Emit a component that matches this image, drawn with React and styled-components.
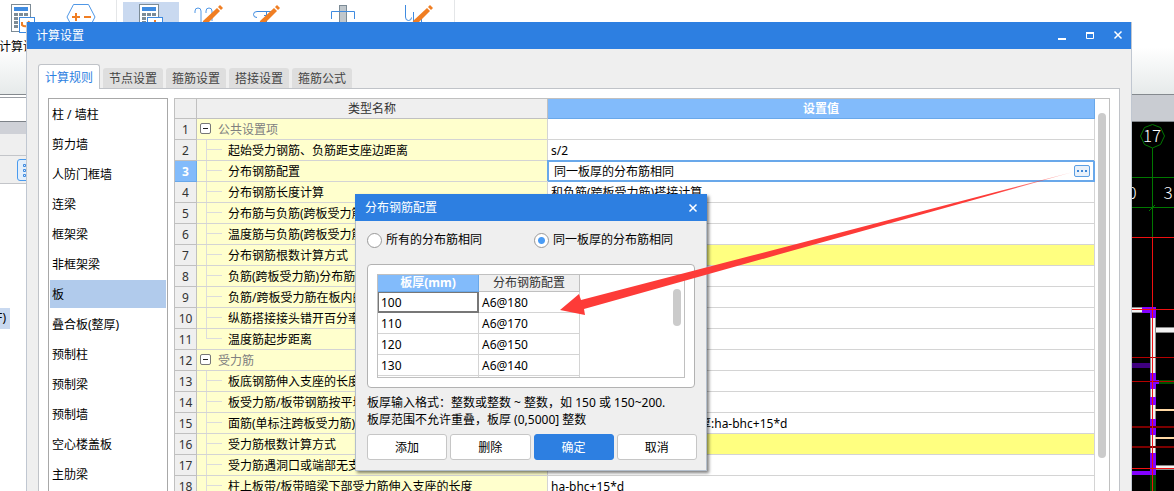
import React, { useState } from 'react';
import styled, { createGlobalStyle, css } from 'styled-components';

const GlobalStyle = createGlobalStyle`
  * { box-sizing: border-box; }
  body {
    margin: 0;
    background: #fff;
    color: #000;
    font: 12px/20px 'Noto Sans', 'Noto Sans CJK SC', sans-serif;
  }
  button, input {
    font: inherit;
    color: inherit;
    margin: 0;
    padding: 0;
  }
`;

const BLUE = '#2d7fe1';
const HEAD_BLUE = '#82bbfb';
const PANEL = '#efefef';

/* ---------- application behind the dialogs ---------- */

const Page = styled.div`
  position: relative;
  height: 100vh;
  overflow: hidden;
  display: flex;
  flex-direction: column;
`;

const Ribbon = styled.header`
  flex: none;
  display: flex;
  gap: 2px;
  height: 95px;
  margin-left: -5px;
  border-bottom: 1px solid #84898e;
  background: linear-gradient(#fff 50%, #e6eaea);
`;

const Tool = styled.button`
  width: ${(p) => (p.$wide ? 92 : 56)}px;
  height: 58px;
  margin-top: 2px;
  border: 0;
  background: ${(p) => (p.$active ? '#c9d9f0' : 'transparent')};
  display: flex;
  flex-direction: column;
  align-items: center;
  gap: 3px;
  padding-top: 2px;
  white-space: nowrap;
`;

const ToolSplit = styled.span`
  width: 1px;
  margin: 0 4px 0 5px;
  background: #e4e6e8;
`;

const Workspace = styled.div`
  flex: 1;
  min-height: 0;
  display: flex;
`;

const SidePane = styled.aside`
  width: 300px;
  display: flex;
  flex-direction: column;
`;

const SideField = styled.div`
  height: 25px;
  margin-top: 2px;
  border-top: 1px solid #9a9ea4;
  border-bottom: 1px solid #7d8288;
`;

const SideCaption = styled.div`
  height: ${(p) => (p.$dark ? 12 : 21)}px;
  background: ${(p) => (p.$dark ? '#cfd1d7' : PANEL)};
`;

const SideTools = styled.div`
  height: 29px;
  padding: 3px 17px;
  background: ${PANEL};
  border-top: 1px solid #c3c5c9;
  border-bottom: 1px solid #c3c5c9;
`;

const ListToggle = styled.button`
  width: 22px;
  height: 22px;
  border: 1px solid #4a9bee;
  border-radius: 3px;
  background: #e3effc;
  display: flex;
  padding: 3px 4px;
`;

const TreeItem = styled.div`
  display: flex;
  justify-content: flex-end;
  width: 10px;
  margin-top: 124px;
  height: 21px;
  background: #c9d9f0;
  padding-right: 4px;
  white-space: nowrap;
`;

const Drawing = styled.section`
  flex: 1;
  display: flex;
  flex-direction: column;
  align-items: stretch;
`;

const DrawingBar = styled.div`
  height: 27px;
  background: #c9ccd2;
  border-bottom: 1px solid #80858b;
`;

const DrawingArea = styled.div`
  flex: 1;
  min-height: 0;
  overflow: hidden;
  background: #000;
  display: flex;
  justify-content: flex-end;
  align-items: flex-start;
  svg {
    flex: none;
    overflow: visible;
  }
`;

/* ---------- windows ---------- */

const SettingsWindow = styled.section`
  position: absolute;
  inset: 22px 42px 0 26px;
  overflow: hidden;
  display: flex;
  flex-direction: column;
  background: ${PANEL};
  border: solid #c0c7d1;
  border-width: 0 1px;
`;

const TitleBar = styled.div`
  flex: none;
  display: flex;
  align-items: center;
  justify-content: space-between;
  height: 27px;
  margin: 0 -1px;
  padding-left: 10px;
  background: ${BLUE};
  color: #fff;
`;

const Title = styled.h1`
  margin: 0;
  font-size: 12px;
  font-weight: 400;
`;

const WindowButton = styled.button`
  width: 28px;
  height: 27px;
  border: 0;
  background: none;
  display: inline-flex;
  align-items: center;
  justify-content: center;
`;

const Tabs = styled.nav`
  flex: none;
  display: flex;
  align-items: flex-end;
  gap: 3px;
  padding: 15px 11px 0;
`;

const Tab = styled.button`
  width: 60px;
  height: 20px;
  padding-top: 1px;
  border: 0;
  border-radius: 3px 3px 0 0;
  background: #dedede;
  color: #444;
  white-space: nowrap;
  ${(p) => p.$active && css`
    width: 62px;
    height: 25px;
    margin: 0 0 -1px;
    z-index: 1;
    border: 1px solid #c0c3c8;
    border-bottom: 0;
    background: #fff;
    color: ${BLUE};
  `}
`;

const TabPanel = styled.div`
  flex: 1;
  min-height: 0;
  margin: 0 11px;
  padding: 9px 9px 0;
  display: flex;
  gap: 6px;
  background: #fff;
  border: 1px solid #c0c3c8;
  border-bottom: 0;
`;

const Categories = styled.ul`
  flex: none;
  width: 120px;
  margin: 0;
  padding: 1px;
  list-style: none;
  display: flex;
  flex-direction: column;
  gap: 2px;
  overflow: hidden;
  border: 1px solid #a8a8a8;
  border-bottom: 0;
`;

const Category = styled.li`
  flex: none;
  height: 28px;
  padding: 0 2px;
  line-height: 30px;
  background: ${(p) => (p.$active ? '#b1cbec' : 'transparent')};
`;

const GridFrame = styled.div`
  flex: 1;
  min-width: 0;
  overflow: hidden;
  display: flex;
  align-items: flex-start;
  background: #fff;
  border: 1px solid #c0c0c0;
  border-bottom: 0;
`;

const ScrollTrack = styled.div`
  flex: none;
  width: 14px;
  padding: 14px 3px 0;
`;

const ScrollThumb = styled.div`
  width: 8px;
  height: ${(p) => p.$length}px;
  border-radius: 4px;
  background: #cbcbcb;
`;

const Grid = styled.table`
  flex: 1;
  width: 100%;
  table-layout: fixed;
  border-collapse: separate;
  border-spacing: 0;
  th, td {
    height: 21px;
    padding: 2px 0 0;
    line-height: 18px;
    border: solid #d4d4d4;
    border-width: 0 1px 1px 0;
    white-space: nowrap;
    overflow: hidden;
  }
`;

const Col = styled.col`
  width: ${(p) => p.$w}px;
`;

const HeadCell = styled.th`
  && {
    height: 20px;
    padding-top: 1px;
    border-color: #c0c0c0;
    background: ${PANEL};
    color: #333;
    font-weight: 400;
    ${(p) => p.$active && css`
      background: ${HEAD_BLUE};
      border-color: #69a8ea;
      color: #fff;
      font-weight: 700;
    `}
  }
`;

const RowHead = styled.th`
  && {
    border-color: #c0c0c0;
    background: ${PANEL};
    color: #333;
    font-weight: 400;
    ${(p) => p.$active && css`
      background: ${HEAD_BLUE};
      border-color: #69a8ea;
      color: #fff;
      font-weight: 700;
    `}
  }
`;

const NameCell = styled.td`
  && {
    padding: 0;
    background: #ffffcd;
  }
`;

const NameLine = styled.div`
  display: flex;
  height: 20px;
  line-height: 22px;
  color: ${(p) => (p.$group ? '#808080' : '#000')};
`;

const Branch = styled.span`
  flex: none;
  width: 16px;
  margin: 0 6px 0 9px;
  background:
    linear-gradient(#dcdcdc, #dcdcdc) 0 0 / 1px ${(p) => (p.$last ? '10px' : '100%')} no-repeat,
    linear-gradient(#dcdcdc, #dcdcdc) 0 9px / 100% 1px no-repeat;
`;

const Collapse = styled.button`
  flex: none;
  width: 11px;
  height: 11px;
  margin: 4px 7px 0 3px;
  border: 1px solid #777;
  border-radius: 2px;
  background: #fff linear-gradient(#222, #222) center / 5px 1px no-repeat;
`;

const ValueCell = styled.td`
  && {
    padding-left: ${(p) => p.$indent || 3}px;
    background: ${(p) => (p.$marked ? '#ffff80' : '#fff')};
  }
`;

const EditCell = styled.td`
  && {
    position: relative;
    padding: 0;
    background: #fff;
    box-shadow: -1px -1px 0 #69a8ea, inset 0 0 0 1px #69a8ea;
    border-color: #69a8ea;
  }
`;

const EditLine = styled.div`
  display: flex;
  align-items: center;
  height: 20px;
  padding: 0 4px 0 6px;
`;

const EditInput = styled.input`
  flex: 1;
  min-width: 0;
  height: 18px;
  padding-top: 1px;
  border: 0;
  outline: 0;
  background: transparent;
`;

const MoreButton = styled.button`
  width: 16px;
  height: 12px;
  border: 1px solid #5c9fe3;
  border-radius: 2px;
  background: #e9f1fa;
  display: flex;
  align-items: center;
  justify-content: center;
`;

/* ---------- distribution bar dialog ---------- */

const ConfigDialog = styled.section`
  position: absolute;
  left: 355px;
  top: 194px;
  width: 352px;
  background: ${PANEL};
  border: 1px solid #b4bfcc;
  border-top: 0;
  box-shadow: 2px 2px 3px rgba(0, 0, 0, 0.5);
`;

const DialogBody = styled.div`
  padding: 9px 9px 10px 11px;
`;

const Choices = styled.div`
  display: grid;
  grid-template-columns: 167px 1fr;
  height: 34px;
`;

const Choice = styled.label`
  display: flex;
  height: 20px;
  line-height: 22px;
  align-items: center;
  gap: 4px;
`;

const Radio = styled.input`
  appearance: none;
  width: 15px;
  height: 15px;
  border: 1px solid #999;
  border-radius: 50%;
  background: #fff;
  &:checked {
    background: radial-gradient(circle, #4a9cf5 3px, #fff 4px);
  }
`;

const GroupBox = styled.div`
  margin-right: 2px;
  padding: 9px;
  background: #fff;
  border: 1px solid #b2b2b2;
  border-radius: 4px;
`;

const SmallFrame = styled.div`
  display: flex;
  justify-content: space-between;
  height: 104px;
  overflow: hidden;
  border: 1px solid #c0c0c0;
`;

const SmallGrid = styled(Grid)`
  flex: none;
  width: 202px;
  ${HeadCell} {
    height: 17px;
    padding-top: 0;
    line-height: 16px;
  }
`;

const SmallCell = styled.td`
  && {
    padding-left: 3px;
    ${(p) => p.$current && css`
      box-shadow: inset 0 0 0 1px #777;
      border-color: #777;
    `}
  }
`;

const Hint = styled.p`
  margin: 6px 0;
  line-height: 17px;
`;

const Actions = styled.div`
  display: flex;
  gap: 3px;
`;

const Action = styled.button`
  flex: 1;
  height: 26px;
  padding-top: 1px;
  border: 1px solid ${(p) => (p.$primary ? BLUE : '#c6c6c6')};
  border-radius: 3px;
  background: ${(p) => (p.$primary ? BLUE : '#fff')};
  color: ${(p) => (p.$primary ? '#fff' : '#000')};
`;

const Pointer = styled.svg`
  position: absolute;
  left: 555px;
  top: 165px;
  pointer-events: none;
`;

/* ---------- drawings ---------- */

const CalculatorIcon = ({ mark }) => (
  <svg width="24" height="30" viewBox="0 0 24 30" aria-hidden="true">
    <rect x="0.5" y="0.5" width="19" height="27" fill="#fff" stroke="#7c8b96" />
    <rect x="3" y="3" width="14" height="4" fill="#3f8be0" />
    {[9, 13, 17, 21].map((y) =>
      [3, 8, 13].map((x) => <rect key={`${x}-${y}`} x={x} y={y} width="4" height="3" fill="#7c8b96" />)
    )}
    <rect x="8.5" y="13.5" width="15" height="15" fill="#fff" stroke="#3f8be0" />
    {mark === 'gear' ? (
      <path d="M11 18v3q2 2 5 1l2-5" fill="none" stroke="#f07e23" strokeWidth="2" />
    ) : (
      <path d="M16 16v6M13 20h6" stroke="#f07e23" strokeWidth="2" />
    )}
  </svg>
);

const HexIcon = () => (
  <svg width="30" height="30" viewBox="0 0 30 30" aria-hidden="true">
    <path d="M7.500 .5h15l6.500 12.500-6.500 12.500h-15L1 13z" fill="#fff" stroke="#4f97e6" />
    <path d="M6 13h8M10 9v8M18 13h7" stroke="#f07e23" strokeWidth="2" />
  </svg>
);

const Pencil = ({ x }) => (
  <g transform={`translate(${x} 0)`} fill="#f07e23">
    <path d="M14 4l3 3L4 20l-5 2 1-5z" />
    <path d="M15 3l2-2 3 3-2 2z" />
  </g>
);

const HooksIcon = () => (
  <svg width="30" height="30" viewBox="0 0 30 30" aria-hidden="true">
    <path d="M1 9V7q0-3 3-3t3 3v21M12 9V7q0-3 3-3t3 3v10" fill="none" stroke="#4f97e6" />
    <Pencil x={9} />
  </svg>
);

const BentIcon = () => (
  <svg width="30" height="30" viewBox="0 0 30 30" aria-hidden="true">
    <path d="M19 7.500H5Q1.500 7.500 1.500 10.500T5 13.500M14.500 8v10M12 11.500h7" fill="none" stroke="#3f8be0" />
    <Pencil x={8} />
  </svg>
);

const ColumnIcon = () => (
  <svg width="26" height="30" viewBox="0 0 26 30" aria-hidden="true">
    <rect x="9.500" y="1.500" width="7" height="27" fill="#c0c7cc" stroke="#7c8b96" />
    <path d="M1.500 15V7.500h23V15" fill="none" stroke="#3f8be0" />
  </svg>
);

const HookRightIcon = () => (
  <svg width="30" height="30" viewBox="0 0 30 30" aria-hidden="true">
    <path d="M1.500 1v12q0 3.500 3 3.500t3-3M9.500 8v20M17.500 14v14" fill="none" stroke="#3f8be0" />
    <Pencil x={9} />
  </svg>
);

const CloseIcon = () => (
  <svg width="10" height="10" viewBox="0 0 10 10" aria-hidden="true">
    <path d="M1.500 1.500l7 7M8.500 1.500l-7 7" stroke="#fff" strokeWidth="1.500" />
  </svg>
);

const MinimizeIcon = () => (
  <svg width="8" height="8" viewBox="0 0 8 8" aria-hidden="true">
    <path d="M0 7h8" stroke="#fff" strokeWidth="2" />
  </svg>
);

const MaximizeIcon = () => (
  <svg width="8" height="8" viewBox="0 0 8 8" aria-hidden="true">
    <path d="M.5 1v5.500h7V1" fill="none" stroke="#fff" />
    <path d="M0 1h8" stroke="#fff" strokeWidth="2" />
  </svg>
);

const FloorPlan = () => (
  <svg width="42" height="369" viewBox="0 0 42 369" shapeRendering="crispEdges" role="img" aria-label="17">
    <g stroke="#007800" fill="none">
      <path shapeRendering="auto" d="M20.500 2.500l8 3 4 8.500-4 8.500-8 3.500-8-3.500-4-8.500 4-8.500z" />
      <path d="M20.500 26v90M0 55.500h42M0 85.500h42M17 89l6-6" />
    </g>
    <g fill="#fff" fontFamily="'Noto Sans CJK SC', sans-serif" fontSize="17" fontWeight="300" textAnchor="middle">
      <text x="20" y="20">17</text>
      <text x="0" y="77">0</text>
      <text x="36" y="77">3</text>
    </g>
    <g fill="#f2f2f2" stroke="#8a8a8a">
      <rect x="-1.500" y="185.500" width="12" height="5" />
      <rect x="20.500" y="205.500" width="24" height="5" />
      <rect x="18.500" y="190.500" width="5" height="142" />
      <rect x="22.500" y="343.500" width="24" height="4" />
    </g>
    <g fill="#8200ff">
      <path d="M10 185h14v11h-6v-5h-8z" />
      <rect x="18" y="251" width="6" height="16" />
      <rect x="24" y="258" width="3" height="4" />
      <rect x="18" y="275" width="6" height="8" />
      <rect x="18" y="297" width="6" height="16" />
      <rect x="18" y="331" width="6" height="22" />
      <rect x="0" y="349" width="20" height="4" />
    </g>
    <rect x="0" y="241" width="18" height="5" fill="#3f0080" />
    <rect x="27" y="258" width="15" height="4" fill="#005000" />
    <rect x="18" y="353" width="6" height="16" fill="#004a00" />
    <path d="M23 288h19M23 316h19" stroke="#ffd8a4" strokeWidth="2" />
    <path d="M0 305h42M0 325h42" stroke="#7c0000" strokeWidth="2" />
    <path d="M0 235.500h42M0 259.500h42" stroke="#b40000" />
    <path d="M0 115.500h42M0 187.500h42M0 346.500h42M20.500 116v253" stroke="#f01010" />
  </svg>
);

/* ---------- data ---------- */

const tabNames = ['计算规则', '节点设置', '箍筋设置', '搭接设置', '箍筋公式'];

const categories = [
  '柱 / 墙柱', '剪力墙', '人防门框墙', '连梁', '框架梁', '非框架梁', '板',
  '叠合板(整厚)', '预制柱', '预制梁', '预制墙', '空心楼盖板', '主肋梁',
];

const rows = [
  { name: '公共设置项', group: true },
  { name: '起始受力钢筋、负筋距支座边距离', value: 's/2' },
  { name: '分布钢筋配置', edit: true },
  { name: '分布钢筋长度计算', value: '和负筋(跨板受力筋)搭接计算' },
  { name: '分布筋与负筋(跨板受力筋)' },
  { name: '温度筋与负筋(跨板受力筋)' },
  { name: '分布钢筋根数计算方式', marked: true },
  { name: '负筋(跨板受力筋)分布筋' },
  { name: '负筋/跨板受力筋在板内的' },
  { name: '纵筋搭接接头错开百分率' },
  { name: '温度筋起步距离', last: true },
  { name: '受力筋', group: true },
  { name: '板底钢筋伸入支座的长度' },
  { name: '板受力筋/板带钢筋按平均' },
  { name: '面筋(单标注跨板受力筋)', value: '厚:ha-bhc+15*d', indent: 151 },
  { name: '受力筋根数计算方式', marked: true },
  { name: '受力筋遇洞口或端部无支' },
  { name: '柱上板带/板带暗梁下部受力筋伸入支座的长度', value: 'ha-bhc+15*d' },
];

const thicknesses = [
  ['100', 'A6@180'],
  ['110', 'A6@170'],
  ['120', 'A6@150'],
  ['130', 'A6@140'],
  ['', ''],
];

function SettingRow({ row, index }) {
  const [text, setText] = useState('同一板厚的分布筋相同');
  return (
    <tr>
      <RowHead scope="row" $active={row.edit}>{index + 1}</RowHead>
      <NameCell>
        <NameLine $group={row.group}>
          {row.group ? <Collapse aria-label="折叠" /> : <Branch $last={row.last} />}
          {row.name}
        </NameLine>
      </NameCell>
      {row.edit ? (
        <EditCell>
          <EditLine>
            <EditInput aria-label={row.name} value={text} onChange={(e) => setText(e.target.value)} />
            <MoreButton aria-label="更多">
              <svg width="10" height="2" viewBox="0 0 10 2" aria-hidden="true">
                <path d="M0 1h2M4 1h2M8 1h2" stroke="#3f87d6" strokeWidth="2" />
              </svg>
            </MoreButton>
          </EditLine>
        </EditCell>
      ) : (
        <ValueCell $marked={row.marked} $indent={row.indent}>{row.value}</ValueCell>
      )}
    </tr>
  );
}

function DistributionDialog() {
  const [mode, setMode] = useState('thickness');
  return (
    <ConfigDialog role="dialog" aria-label="分布钢筋配置">
      <TitleBar>
        <Title as="h2">分布钢筋配置</Title>
        <WindowButton aria-label="关闭"><CloseIcon /></WindowButton>
      </TitleBar>
      <DialogBody>
        <Choices>
          <Choice>
            <Radio type="radio" name="mode" checked={mode === 'all'} onChange={() => setMode('all')} />
            所有的分布筋相同
          </Choice>
          <Choice>
            <Radio type="radio" name="mode" checked={mode === 'thickness'} onChange={() => setMode('thickness')} />
            同一板厚的分布筋相同
          </Choice>
        </Choices>
        <GroupBox>
          <SmallFrame>
            <SmallGrid>
              <thead>
                <tr>
                  <HeadCell scope="col" $active>板厚(mm)</HeadCell>
                  <HeadCell scope="col">分布钢筋配置</HeadCell>
                </tr>
              </thead>
              <tbody>
                {thicknesses.map(([size, bar], i) => (
                  <tr key={i}>
                    <SmallCell $current={i === 0}>{size}</SmallCell>
                    <SmallCell>{bar}</SmallCell>
                  </tr>
                ))}
              </tbody>
            </SmallGrid>
            <ScrollTrack><ScrollThumb $length={37} /></ScrollTrack>
          </SmallFrame>
        </GroupBox>
        <Hint>
          板厚输入格式：整数或整数 ~ 整数，如 150 或 150~200.
          <br />
          板厚范围不允许重叠，板厚 (0,5000] 整数
        </Hint>
        <Actions>
          <Action>添加</Action>
          <Action>删除</Action>
          <Action $primary>确定</Action>
          <Action>取消</Action>
        </Actions>
      </DialogBody>
    </ConfigDialog>
  );
}

export default function App() {
  return (
    <>
      <GlobalStyle />
      <Page>
        <Ribbon>
          <Tool><CalculatorIcon mark="gear" />计算设置</Tool>
          <Tool aria-label="比重设置"><HexIcon /></Tool>
          <ToolSplit />
          <Tool $active aria-label="计算设置"><CalculatorIcon /></Tool>
          <Tool aria-label="弯钩设置"><HooksIcon /></Tool>
          <Tool aria-label="弯折设置"><BentIcon /></Tool>
          <Tool $wide aria-label="节点设置"><ColumnIcon /></Tool>
          <Tool aria-label="弯钩编辑"><HookRightIcon /></Tool>
          <ToolSplit />
        </Ribbon>
        <Workspace>
          <SidePane>
            <SideField />
            <SideCaption $dark />
            <SideCaption />
            <SideTools>
              <ListToggle aria-label="列表">
                <svg width="12" height="14" viewBox="0 0 12 14" fill="none" stroke="#3f8be0" aria-hidden="true">
                  <path d="M1.500 1.500h2v2h-2zM1.500 6.500h2v2h-2zM1.500 11.500h2v2h-2zM6 2.500h6M6 7.500h6M6 12.500h6" />
                </svg>
              </ListToggle>
            </SideTools>
            <TreeItem>F)</TreeItem>
          </SidePane>
          <Drawing>
            <DrawingBar />
            <DrawingArea><FloorPlan /></DrawingArea>
          </Drawing>
        </Workspace>

        <SettingsWindow role="dialog" aria-label="计算设置">
          <TitleBar>
            <Title>计算设置</Title>
            <div>
              <WindowButton aria-label="最小化"><MinimizeIcon /></WindowButton>
              <WindowButton aria-label="最大化"><MaximizeIcon /></WindowButton>
              <WindowButton aria-label="关闭"><CloseIcon /></WindowButton>
            </div>
          </TitleBar>
          <Tabs>
            {tabNames.map((name, i) => <Tab key={name} $active={i === 0}>{name}</Tab>)}
          </Tabs>
          <TabPanel>
            <Categories>
              {categories.map((name) => <Category key={name} $active={name === '板'}>{name}</Category>)}
            </Categories>
            <GridFrame>
              <Grid>
                <colgroup>
                  <Col $w={22} />
                  <Col $w={351} />
                  <col />
                </colgroup>
                <thead>
                  <tr>
                    <HeadCell />
                    <HeadCell scope="col">类型名称</HeadCell>
                    <HeadCell scope="col" $active>设置值</HeadCell>
                  </tr>
                </thead>
                <tbody>
                  {rows.map((row, i) => <SettingRow key={i} row={row} index={i} />)}
                </tbody>
              </Grid>
              <ScrollTrack><ScrollThumb $length={345} /></ScrollTrack>
            </GridFrame>
          </TabPanel>
        </SettingsWindow>

        <DistributionDialog />

        <Pointer width="525" height="155" viewBox="0 0 525 155" aria-hidden="true">
          <defs>
            <linearGradient id="fade" x1="0" x2="1" y1="0" y2="0">
              <stop offset="0.850" stopColor="#fd3b38" />
              <stop offset="1" stopColor="#fd3b38" stopOpacity="0.300" />
            </linearGradient>
          </defs>
          <path d="M5 145L24 129l2 6L518 7 29 144l1 6z" fill="url(#fade)" />
        </Pointer>
      </Page>
    </>
  );
}
